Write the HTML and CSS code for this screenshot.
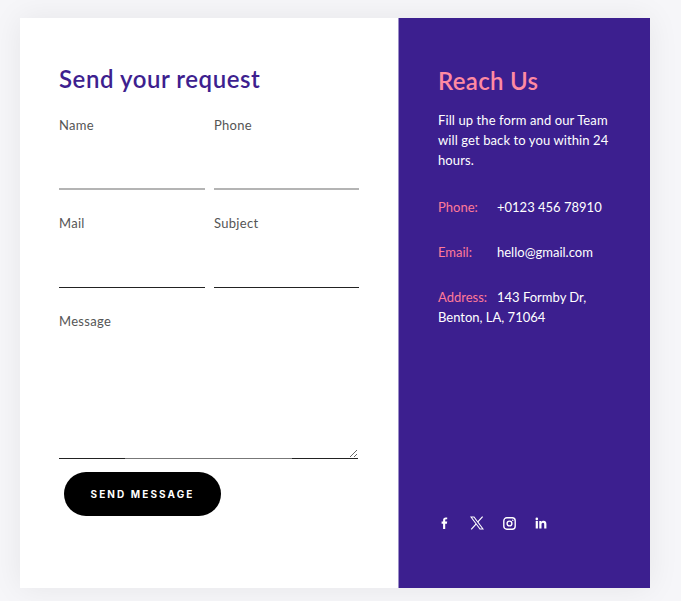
FILE: index.html
```html
<!DOCTYPE html>
<html lang="en">
<head>
<meta charset="utf-8">
<title>Contact</title>
<link rel="stylesheet" href="styles.css">
</head>
<body>
<main class="card">
  <section class="form-panel">
    <h1 class="form-title">Send your request</h1>
    <form class="form-grid">
      <div class="field">
        <label class="label" for="name">Name</label>
        <input class="input input-grey" id="name" type="text">
      </div>
      <div class="field">
        <label class="label" for="phone">Phone</label>
        <input class="input input-grey" id="phone" type="text">
      </div>
      <div class="field">
        <label class="label" for="mail">Mail</label>
        <input class="input" id="mail" type="text">
      </div>
      <div class="field">
        <label class="label" for="subject">Subject</label>
        <input class="input" id="subject" type="text">
      </div>
      <div class="field field-wide">
        <label class="label" for="message">Message</label>
        <textarea class="textarea" id="message"></textarea>
      </div>
      <div class="field-wide">
        <button class="send" type="button">SEND MESSAGE</button>
      </div>
    </form>
  </section>
  <aside class="info-panel">
    <h2 class="info-title">Reach Us</h2>
    <p class="info-text">Fill up the form and our Team will get back to you within 24 hours.</p>
    <ul class="contacts">
      <li class="contact"><span class="key key-phone">Phone:</span>+0123 456 78910</li>
      <li class="contact"><span class="key key-email">Email:</span>hello@gmail.com</li>
      <li class="contact contact-address"><span class="key key-address">Address:</span>143 Formby Dr, Benton, LA, 71064</li>
    </ul>
    <div class="socials">
      <a class="social" href="#" aria-label="Facebook">
        <svg viewBox="0 0 12 12" width="12" height="12"><path fill="#fff" d="M4.1 12V6.7H2.6V4.6h1.5V3.1C4.1 1.3 5.1.4 6.7.4c.7 0 1.2 0 1.5.1v1.8H7.2c-.8 0-1 .4-1 1v1.3h2l-.3 2.1H6.2V12z"/></svg>
      </a>
      <a class="social" href="#" aria-label="X">
        <svg viewBox="0 0 14 14" width="14" height="14"><path fill="none" stroke="#fff" stroke-width="1.1" d="M1 1h3l9 12h-3z"/><path fill="none" stroke="#fff" stroke-width="1.2" d="M12.6 .6 7.6 6.2M6.2 7.8 1.2 13.4"/></svg>
      </a>
      <a class="social" href="#" aria-label="Instagram">
        <svg viewBox="0 0 13 13" width="13" height="13"><rect x="0.8" y="0.8" width="11.4" height="11.4" rx="3" fill="none" stroke="#fff" stroke-width="1.4"/><circle cx="6.5" cy="6.5" r="2.4" fill="none" stroke="#fff" stroke-width="1.4"/><circle cx="9.8" cy="3.2" r=".8" fill="#fff"/></svg>
      </a>
      <a class="social" href="#" aria-label="LinkedIn">
        <svg viewBox="0 0 12 12" width="12" height="12"><path fill="#fff" d="M.7 4h2.2v7.4H.7zM1.8.6a1.3 1.3 0 1 1 0 2.6 1.3 1.3 0 0 1 0-2.6zM4.3 4h2.1v1c.4-.7 1.2-1.2 2.3-1.2 2.1 0 2.7 1.3 2.7 3.2v4.4H9.2V7.5c0-1-.2-1.8-1.2-1.8s-1.5.8-1.5 1.8v3.9H4.3z"/></svg>
      </a>
    </div>
  </aside>
</main>
</body>
</html>
```
FILE: styles.css
```css
* { box-sizing: border-box; }
html, body { margin: 0; padding: 0; }
body {
  background: #f6f6f9;
  font-family: "Lato", "Open Sans", sans-serif;
  padding: 18px 31px 13px 20px;
}
.card {
  display: flex;
  width: 630px;
  height: 570px;
  box-shadow: 0 0 30px rgba(0, 0, 0, 0.07);
}
.form-panel {
  width: 378px;
  background: #fff;
  padding: 46px 39px 0;
}
.form-title {
  margin: 0;
  font-size: 24px;
  line-height: 30px;
  font-weight: 600;
  color: #3e1f8f;
  letter-spacing: 0.55px;
}
.form-grid {
  display: grid;
  grid-template-columns: 146px 145px;
  column-gap: 9px;
  margin-top: 22px;
}
.field { display: flex; flex-direction: column; }
.field-wide { grid-column: 1 / -1; }
.label {
  font-size: 13px;
  line-height: 18px;
  color: #555;
  letter-spacing: 0.3px;
}
.input {
  display: block;
  width: 100%;
  height: 56px;
  margin-bottom: 24px;
  border: 0;
  border-bottom: 1px solid #222;
  outline: 0;
  background: transparent;
}
.input-grey { border-bottom: 2px solid #b4b4b4; }
.textarea {
  display: block;
  width: 299px;
  height: 129px;
  border: 0;
  border-bottom: 1px solid;
  border-image: linear-gradient(to right, #222 67px, #777 67px, #777 232px, #222 232px) 1;
  outline: 0;
  background: transparent;
}
.send {
  display: block;
  width: 157px;
  height: 44px;
  margin: 13px 0 0 5px;
  border: 0;
  border-radius: 22px;
  background: #000;
  color: #fff;
  font-family: "Inter", sans-serif;
  font-size: 10px;
  font-weight: 700;
  letter-spacing: 2.1px;
}
.info-panel {
  display: flex;
  flex-direction: column;
  width: 252px;
  padding: 48px 39px 0;
  background: #3c1f8f;
  border-left: 1px solid #9c8fc7;
}
.info-title {
  margin: 0;
  font-size: 24px;
  line-height: 30px;
  font-weight: 600;
  color: #ff8aa2;
  letter-spacing: 0.3px;
}
.info-text {
  margin: 14px 0 0;
  font-size: 13px;
  line-height: 20px;
  color: #fff;
  letter-spacing: 0.1px;
}
.contacts {
  list-style: none;
  margin: 27px 0 0;
  padding: 0;
  font-size: 13px;
  line-height: 20px;
  color: #fff;
}
.contact { margin-bottom: 25px; }
.key { display: inline-block; width: 59px; }
.key-phone, .key-email, .key-address { color: #ff7a98; }
.contact-address .key { width: 59px; }
.socials {
  display: flex;
  align-items: center;
  gap: 18px;
  margin-top: 164px;
}
.social { display: flex; width: 14px; justify-content: center; }
```
